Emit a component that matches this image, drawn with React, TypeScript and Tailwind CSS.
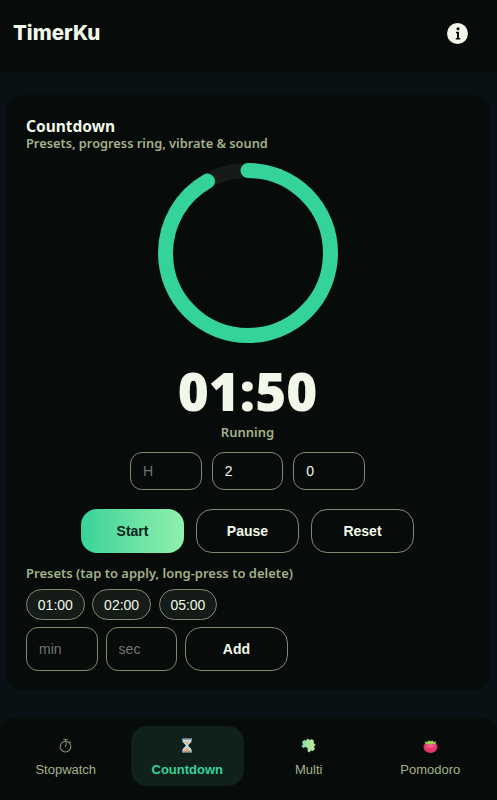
import React from 'react';

const StopwatchIcon = () => (
  <svg width="13" height="15" viewBox="0 0 13 15" fill="none" stroke="#7f8d72" strokeWidth="1.1" strokeLinecap="round">
    <circle cx="6.500" cy="8.700" r="5.300" />
    <path d="M4.800 1.500h3.400M6.500 1.500v1.800M6.500 8.700 7.400 5M10.600 3.800l.8.8" />
  </svg>
);

const HourglassIcon = () => (
  <svg width="12" height="15" viewBox="0 0 12 15">
    <path d="M1.500 1.500h9v2.200L7 7.500l3.500 3.800v2.200h-9v-2.200L5 7.500 1.500 3.700z" fill="#b9dcec" />
    <path d="M2.800 3.400h6.400L6 7z" fill="#f2b36b" />
    <path d="M2.600 13 6 9.400 9.400 13z" fill="#f0a65a" />
    <rect x="1" y="0.400" width="10" height="1.500" fill="#9aa6b0" />
    <rect x="1" y="13.100" width="10" height="1.500" fill="#9aa6b0" />
  </svg>
);

const PuzzleIcon = () => (
  <svg width="15" height="15" viewBox="1.500 1.500 12 12">
    <defs>
      <linearGradient id="puzzle" x1="1" y1="0" x2="0" y2="1">
        <stop offset="0" stopColor="#d3ee8e" />
        <stop offset="1" stopColor="#7fdca8" />
      </linearGradient>
    </defs>
    <g transform="rotate(38 7.500 7.500)">
      <path
        d="M3.500 3.500h2.300c-.7-2.300 4.100-2.300 3.400 0h2.300v2.300c2.300-.7 2.300 4.100 0 3.400v2.300H9.200c.7-2.300-4.100-2.300-3.400 0H3.500V9.200c-2.300.7-2.300-4.100 0-3.400z"
        fill="url(#puzzle)"
      />
    </g>
  </svg>
);

const TomatoIcon = () => (
  <svg width="15" height="14" viewBox="0 0 15 14">
    <ellipse cx="7.500" cy="8" rx="7" ry="5.900" fill="#e6336a" />
    <ellipse cx="7.500" cy="7" rx="4.500" ry="2" fill="#f05a8a" />
    <path d="M1.500 2.500 4.500 3 5.500 1.400 7.500 2.400 9.500 1.400 10.500 3 13.500 2.500 11.800 5.300 9.500 4.700 7.500 5.700 5.500 4.700 3.200 5.300z" fill="#98d548" />
  </svg>
);

const navItems = [
  { label: 'Stopwatch', icon: <StopwatchIcon />, active: false },
  { label: 'Countdown', icon: <HourglassIcon />, active: true },
  { label: 'Multi', icon: <PuzzleIcon />, active: false },
  { label: 'Pomodoro', icon: <TomatoIcon />, active: false },
];

const inputClass =
  "w-[71.6px] bg-transparent border border-[#7c8a72] rounded-xl px-3 text-sm text-[#f1f8e9] font-['Liberation_Sans',sans-serif] placeholder:text-[#6f7570] outline-none";

const outlineBtn =
  "w-[102.4px] h-[44px] rounded-2xl border border-[#7c8a72] text-sm font-bold text-[#f1f8e9] font-['Liberation_Sans',sans-serif]";

const App: React.FC = () => {
  const r = 82.5;
  const c = 2 * Math.PI * r;
  const progress = 110 / 120;

  return (
    <div className="h-screen overflow-hidden flex flex-col bg-[#0a1114]">
      <header className="h-[72px] shrink-0 bg-[#070c0a] flex items-center justify-between pl-[13px] pr-[29px]">
        <h1 className="text-[20.5px] font-extrabold text-[#f1f8e9] font-['Inter',sans-serif] mb-[5px]">TimerKu</h1>
        <div className="w-[21px] h-[21px] mb-[5px] rounded-full bg-[#f1f8e9] flex items-center justify-center">
          <svg width="6" height="13" viewBox="0 0 6 13" fill="#070c0a">
            <circle cx="3" cy="1.700" r="1.500" />
            <path d="M1 4.800h3V11h1.200v1.500H.8V11H2V6.200H1z" />
          </svg>
        </div>
      </header>

      <main className="pl-[6px] pr-[7px] pt-[23px]">
        <section className="h-[595px] bg-[#070c0a] rounded-2xl pl-5 pr-[21px] pt-[23px] flex flex-col">
          <h2 className="text-[15.5px] leading-[17px] font-bold text-[#f1f8e9] font-['Noto_Sans',sans-serif]">Countdown</h2>
          <p className="text-[12.8px] leading-[17px] font-semibold text-[#a3b18a] font-['Noto_Sans',sans-serif]">
            Presets, progress ring, vibrate &amp; sound
          </p>

          <div className="flex flex-col items-center">
            <svg width="180" height="180" viewBox="0 0 180 180" className="mt-[11px] -rotate-90">
              <circle cx="90" cy="90" r={r} fill="none" stroke="#151c18" strokeWidth="15" />
              <circle
                cx="90"
                cy="90"
                r={r}
                fill="none"
                stroke="#34d399"
                strokeWidth="15"
                strokeLinecap="round"
                strokeDasharray={c}
                strokeDashoffset={c * (1 - progress)}
              />
            </svg>
            <div className="mt-[15px] text-[53px] leading-[65px] font-black text-[#f1f8e9] font-['Noto_Sans',sans-serif]">01:50</div>
            <div className="text-[13px] leading-[18px] font-semibold text-[#a3b18a] font-['Noto_Sans',sans-serif]">Running</div>

            <div className="mt-[11px] flex gap-[10px]">
              <input className={`${inputClass} h-[38px]`} placeholder="H" />
              <input className={`${inputClass} h-[38px]`} defaultValue="2" />
              <input className={`${inputClass} h-[38px]`} defaultValue="0" />
            </div>

            <div className="mt-[19px] flex gap-[12.6px]">
              <button className="w-[102.4px] h-[44px] rounded-2xl bg-gradient-to-r from-[#34d399] to-[#8ef0ac] text-sm font-bold text-[#06241c] font-['Liberation_Sans',sans-serif]">Start</button>
              <button className={outlineBtn}>Pause</button>
              <button className={outlineBtn}>Reset</button>
            </div>
          </div>

          <p className="mt-[11px] text-[13px] leading-[18px] font-semibold text-[#a3b18a] font-['Noto_Sans',sans-serif]">
            Presets (tap to apply, long-press to delete)
          </p>
          <div className="mt-[7px] flex gap-[7.6px]">
            {['01:00', '02:00', '05:00'].map(p => (
              <button key={p} className="w-[58.7px] h-[31px] rounded-full border border-[#7c8a72] bg-[#151c18] text-sm text-[#f1f8e9] font-['Liberation_Sans',sans-serif]">{p}</button>
            ))}
          </div>
          <div className="mt-[7px] flex gap-2">
            <input className={`${inputClass} h-[44px]`} placeholder="min" />
            <input className={`${inputClass} h-[44px]`} placeholder="sec" />
            <button className={outlineBtn}>Add</button>
          </div>
        </section>
      </main>

      <nav className="mt-auto h-[83px] shrink-0 bg-[#070c0a] rounded-t-2xl pl-[9px] pr-[10px] pt-[9px] grid grid-cols-4 gap-2">
        {navItems.map(item => (
          <div
            key={item.label}
            className={`h-[60px] rounded-2xl flex flex-col items-center pt-[12px] gap-[9px] text-[13px] leading-[16px] font-['Liberation_Sans',sans-serif] ${item.active ? 'bg-[#10201a] text-[#34d399] font-bold' : 'text-[#a3b18a]'}`}
          >
            <span className="h-[15px] flex items-center">{item.icon}</span>
            <span>{item.label}</span>
          </div>
        ))}
      </nav>
    </div>
  );
};

export default App;
